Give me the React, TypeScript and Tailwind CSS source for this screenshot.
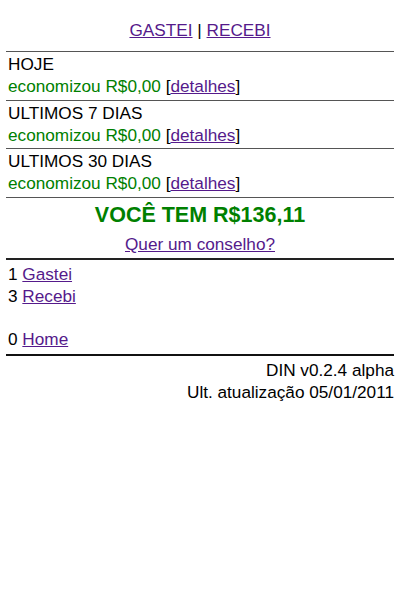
import React from 'react';

const linkCls = "text-[#551a8b] underline";

const periodos = [
    { titulo: "HOJE", valor: "R$0,00" },
    { titulo: "ULTIMOS 7 DIAS", valor: "R$0,00" },
    { titulo: "ULTIMOS 30 DIAS", valor: "R$0,00" },
];

const App = () => {
    return (
        <div className="min-h-screen bg-white px-[6px] text-[17.2px] leading-[22px] text-black font-['Liberation_Sans',Arial,sans-serif]">
            <div className="pt-[19px] pb-[10px] text-center">
                <a href="#" className={linkCls}>GASTEI</a> | <a href="#" className={linkCls}>RECEBI</a>
            </div>

            {periodos.map((p) => (
                <div key={p.titulo} className="border-t border-[#555] pt-[1px] pb-[2.7px] px-[2px]">
                    <div>{p.titulo}</div>
                    <div>
                        <span className="text-[#008000]">economizou {p.valor}</span>{" "}
                        [<a href="#" className={linkCls}>detalhes</a>]
                    </div>
                </div>
            ))}

            <div className="border-t border-[#555] text-center pt-[4px] pb-[3px]">
                <div className="text-[21.5px] leading-[26px] font-bold text-[#008000]">VOCÊ TEM R$136,11</div>
                <div className="mt-[5px]">
                    <a href="#" className={linkCls}>Quer um conselho?</a>
                </div>
            </div>

            <div className="border-t-2 border-[#222] pt-[3px] pb-[4px] px-[2px]">
                <div>1 <a href="#" className={linkCls}>Gastei</a></div>
                <div>3 <a href="#" className={linkCls}>Recebi</a></div>
                <div className="h-[21px]"></div>
                <div>0 <a href="#" className={linkCls}>Home</a></div>
            </div>

            <div className="border-t-2 border-[#111] pt-[3px] text-right">
                <div>DIN v0.2.4 alpha</div>
                <div>Ult. atualização 05/01/2011</div>
            </div>
        </div>
    );
};

export default App;
